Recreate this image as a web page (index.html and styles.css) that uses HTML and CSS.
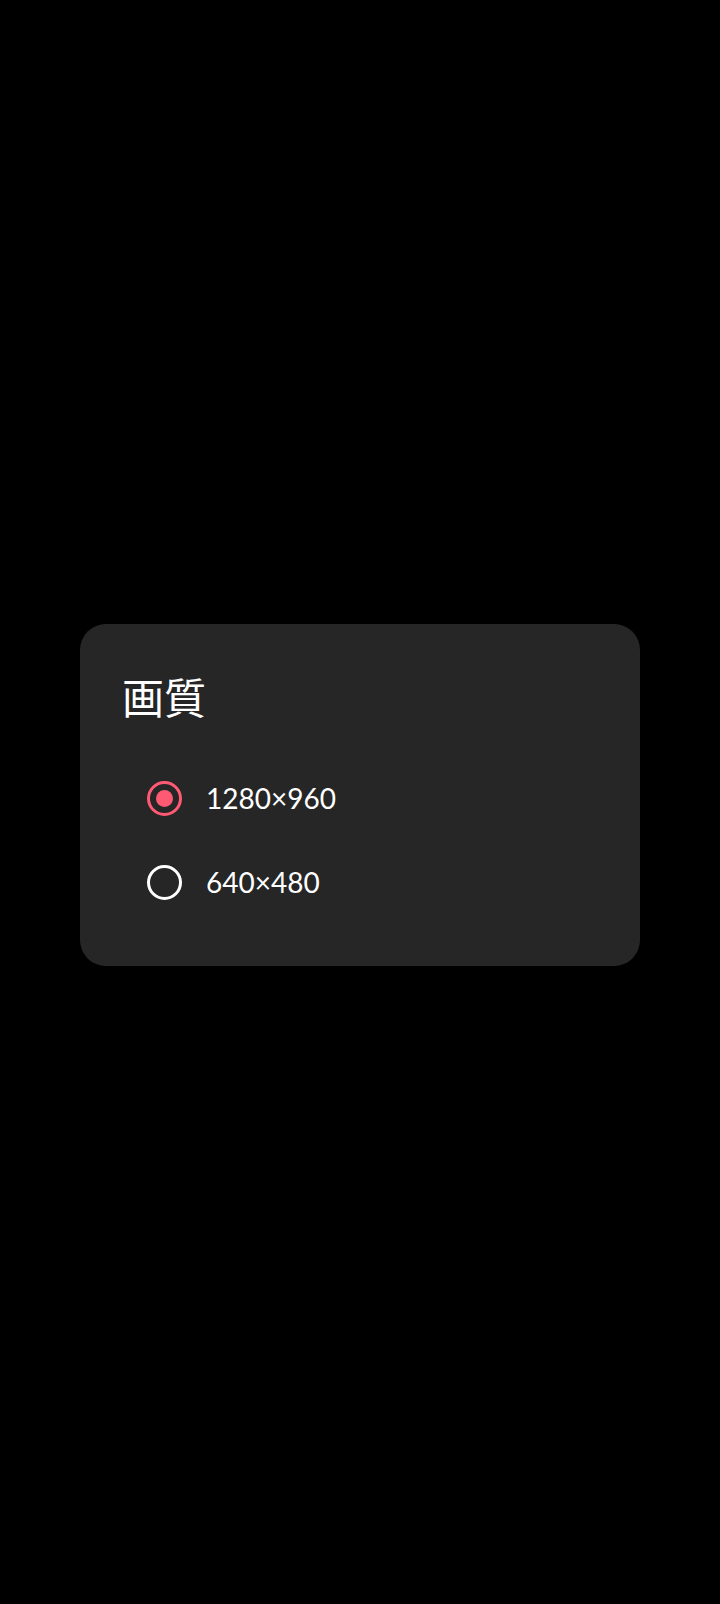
FILE: index.html
```html
<!DOCTYPE html>
<html lang="ja">
<head>
<meta charset="utf-8">
<link rel="stylesheet" href="styles.css">
</head>
<body>
<div class="screen">
  <div class="dialog">
    <div class="title">画質</div>
    <div class="options">
      <div class="option">
        <span class="radio checked"></span>
        <span class="label">1280×960</span>
      </div>
      <div class="option">
        <span class="radio"></span>
        <span class="label">640×480</span>
      </div>
    </div>
  </div>
</div>
</body>
</html>
```

FILE: styles.css
```css
html, body {
  margin: 0;
  padding: 0;
  background: #000;
}
.screen {
  width: 720px;
  height: 1604px;
  padding-top: 624px;
  box-sizing: border-box;
}
.dialog {
  width: 560px;
  height: 342px;
  margin-left: 80px;
  box-sizing: border-box;
  background: #262626;
  border-radius: 26px;
  padding: 44px 0 0 42px;
}
.title {
  font-family: "Noto Sans CJK JP", sans-serif;
  font-size: 42px;
  line-height: 56px;
  color: #fff;
}
.options {
  margin-top: 32px;
  display: flex;
  flex-direction: column;
}
.option {
  height: 84px;
  display: flex;
  align-items: center;
  padding-left: 25px;
  gap: 24px;
}
.radio {
  width: 35px;
  height: 35px;
  box-sizing: border-box;
  border: 3.5px solid #fff;
  border-radius: 50%;
  display: flex;
  align-items: center;
  justify-content: center;
}
.radio.checked {
  border-color: #ff5a74;
}
.radio.checked::after {
  content: "";
  width: 17px;
  height: 17px;
  border-radius: 50%;
  background: #ff5a74;
}
.label {
  font-family: "Lato", sans-serif;
  font-size: 28px;
  color: #fff;
  letter-spacing: 0;
}
```
